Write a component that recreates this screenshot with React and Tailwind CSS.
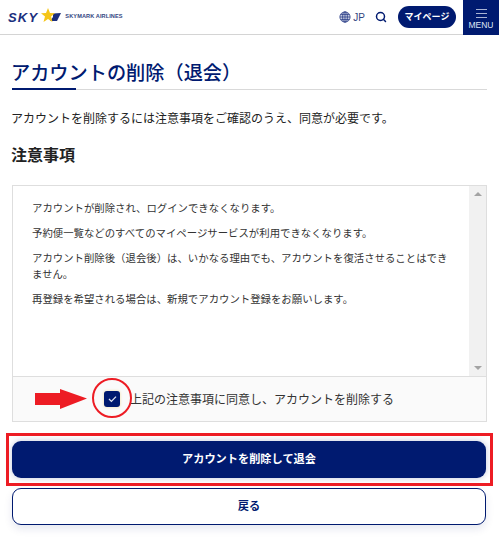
import { Search } from 'lucide-react';

const Logo = () => (
  <div className="flex items-center">
    <span className="text-[13px] leading-none font-black italic text-[#1b2f7e] tracking-[1.2px] font-['Liberation_Sans',sans-serif]">SKY</span>
    <svg width="20" height="15" viewBox="0 0 20 15" className="mb-[3px] ml-[3px]">
      <polygon points="12,5.5 20,5 16,13 9,13 12,9" fill="#1b2f7e" />
      <polygon points="7,0 9,5 14,5.3 10,8.5 11.5,14 7,11 2.5,14 4,8.5 0,5.3 5,5" fill="#f5c518" />
    </svg>
    <span className="ml-1 text-[5.6px] leading-none font-bold text-[#33457f] tracking-[0.1px] font-['Liberation_Sans',sans-serif]">SKYMARK AIRLINES</span>
  </div>
);

const Header = () => (
  <header className="flex h-[35px] items-center justify-between border-b border-[#d4d4d4] pl-2">
    <Logo />
    <div className="flex h-[35px] items-center">
      <svg width="12" height="12" viewBox="0 0 14 14" fill="none" stroke="#1b2f7e" strokeWidth="0.8">
        <circle cx="7" cy="7" r="6" fill="#c5cbe0" />
        <ellipse cx="7" cy="7" rx="2.8" ry="6" />
        <path d="M1 7h12M2 4h10M2 10h10M7 1v12" />
      </svg>
      <span className="ml-[2px] text-[10px] text-[#33457f] font-['Liberation_Sans',sans-serif]">JP</span>
      <Search size={12} strokeWidth={3} className="ml-[10px] text-[#001a70]" />
      <button className="ml-[11px] flex h-[22px] w-[58px] items-center justify-center rounded-full bg-[#001a70] text-[9px] font-bold text-white">マイページ</button>
      <div className="ml-[7px] flex h-[35px] w-[36px] flex-col items-center bg-[#001a70] pt-[9px]">
        <span className="h-px w-[11px] bg-[#aab4d4]" />
        <span className="mt-[3px] h-px w-[11px] bg-[#aab4d4]" />
        <span className="mt-[3px] h-px w-[11px] bg-[#aab4d4]" />
        <span className="mt-[2px] text-[8.5px] leading-[10px] text-[#dfe6f5] font-['Liberation_Sans',sans-serif]">MENU</span>
      </div>
    </div>
  </header>
);

export default function App() {
  return (
    <div className="h-[552px] overflow-hidden bg-white font-['Noto_Sans_CJK_JP',sans-serif] text-[#222]">
      <Header />
      <main className="px-3 pt-[22px]">
        <div className="border-b border-[#d9d9d9]">
          <h1 className="relative -ml-px pb-[2px] text-[19.2px] leading-[30px] font-medium text-[#001a70]">
            アカウントの削除（退会）
            <span className="absolute -bottom-px left-px h-[2px] w-[64px] bg-[#001a70]" />
          </h1>
        </div>
        <p className="mt-[19px] -ml-px text-[12px] leading-[18px]">アカウントを削除するには注意事項をご確認のうえ、同意が必要です。</p>
        <h2 className="mt-[15px] -ml-px text-[16px] leading-[24px] font-bold">注意事項</h2>

        <div className="mt-[19px] w-[475px] border border-[#dedede]">
          <div className="flex h-[190px]">
            <div className="flex-1 pt-[14px] pr-[18px] pl-[19px] text-[10.4px] leading-[16px] text-[#333]">
              <p>アカウントが削除され、ログインできなくなります。</p>
              <p className="mt-[9px]">予約便一覧などのすべてのマイページサービスが利用できなくなります。</p>
              <p className="mt-[9px]">アカウント削除後（退会後）は、いかなる理由でも、アカウントを復活させることはできません。</p>
              <p className="mt-[9px]">再登録を希望される場合は、新規でアカウント登録をお願いします。</p>
            </div>
            <div className="flex w-[17px] flex-col items-center justify-between bg-[#f1f1f1] py-[6px]">
              <span className="h-0 w-0 border-x-[4px] border-b-[4px] border-x-transparent border-b-[#a3a3a3]" />
              <span className="h-0 w-0 border-x-[4px] border-t-[4px] border-x-transparent border-t-[#a3a3a3]" />
            </div>
          </div>
          <div className="flex h-[45px] items-center border-t border-[#dedede] bg-[#fafafa] pl-[91px]">
            <span className="relative flex h-[16px] w-[16px] items-center justify-center rounded-[3px] bg-[#001a70] shadow-[0_0_3px_#f0dca0]">
              <svg width="9" height="8" viewBox="0 0 9 8" fill="none" stroke="#dfe3f0" strokeWidth="1.3">
                <path d="M1 4l2.4 2.4L8 1.6" />
              </svg>
              <span className="absolute -top-[13px] -left-[12px] h-[40px] w-[40px] rounded-full border-[2px] border-[#ed1c24]" />
              <svg width="52" height="20" viewBox="0 0 52 20" className="absolute top-[-2px] -left-[69px]">
                <polygon points="0,4 25,4 25,0 52,9.5 25,20 25,16 0,16" fill="#ed1c24" />
              </svg>
            </span>
            <span className="ml-[10px] text-[12px] leading-[18px] text-[#333]">上記の注意事項に同意し、アカウントを削除する</span>
          </div>
        </div>

        <div className="relative mt-[19px] flex w-[474px] flex-col gap-[10px]">
          <button className="flex h-[37px] items-center justify-center rounded-[9px] bg-[#001a70] pb-[3px] text-[11.2px] font-bold text-white shadow-[0_0_6px_rgba(0,26,112,0.25)]">アカウントを削除して退会</button>
          <button className="flex h-[37px] items-center justify-center rounded-[9px] border border-[#001a70] bg-white pb-[2px] text-[11.2px] font-bold text-[#001a70] shadow-[0_4px_8px_rgba(0,26,112,0.1)]">戻る</button>
          <span className="absolute -top-[8px] -left-[6px] h-[53px] w-[487px] border-[3px] border-[#ed1c24]" />
        </div>
      </main>
    </div>
  );
}
